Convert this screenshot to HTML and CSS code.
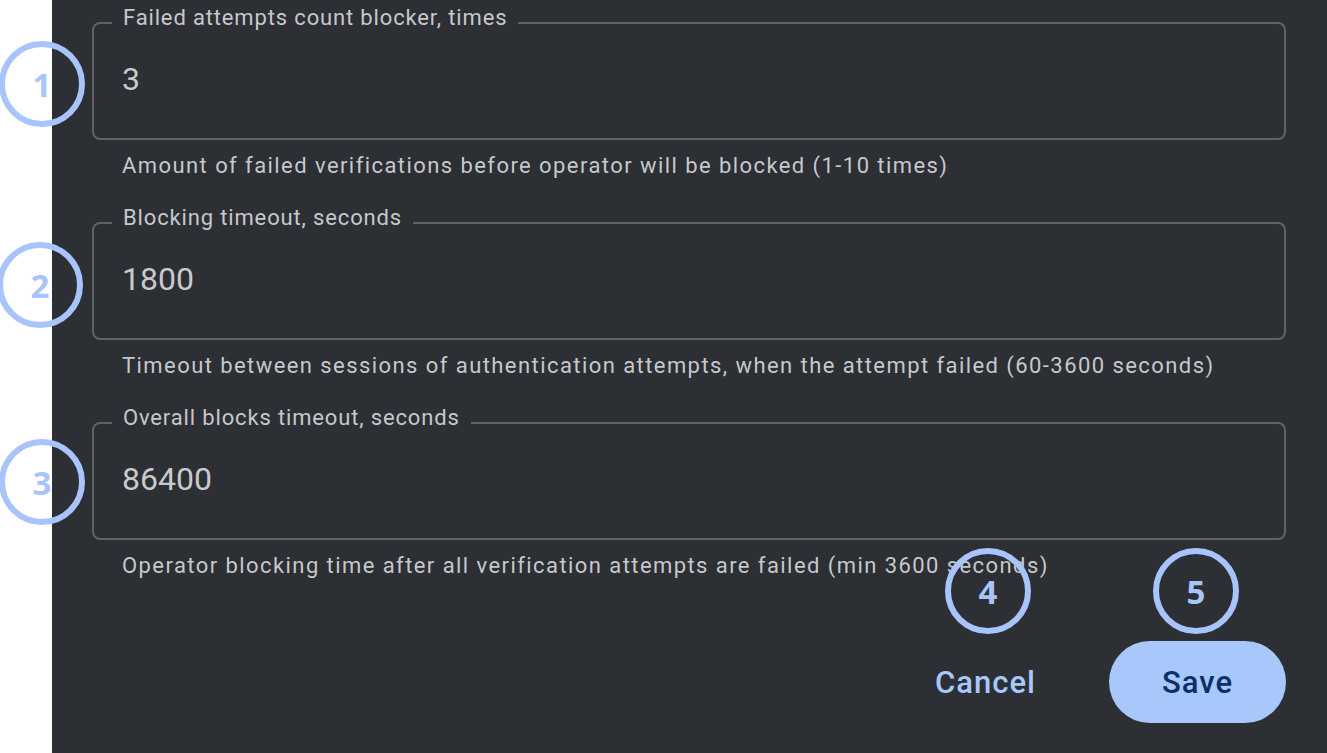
FILE: index.html
```html
<!DOCTYPE html>
<html lang="en">
<head>
<meta charset="utf-8">
<title>Blocking settings</title>
<link rel="stylesheet" href="styles.css">
</head>
<body>
<div class="page">
  <div class="gutter"></div>
  <main class="panel">
    <div class="group">
      <fieldset class="field">
        <legend class="field-label">Failed attempts count blocker, times</legend>
        <div class="field-value">3</div>
      </fieldset>
      <p class="helper">Amount of failed verifications before operator will be blocked (1-10 times)</p>
    </div>
    <div class="group">
      <fieldset class="field">
        <legend class="field-label">Blocking timeout, seconds</legend>
        <div class="field-value">1800</div>
      </fieldset>
      <p class="helper">Timeout between sessions of authentication attempts, when the attempt failed (60-3600 seconds)</p>
    </div>
    <div class="group">
      <fieldset class="field">
        <legend class="field-label">Overall blocks timeout, seconds</legend>
        <div class="field-value">86400</div>
      </fieldset>
      <p class="helper">Operator blocking time after all verification attempts are failed (min 3600 seconds)</p>
    </div>
    <div class="actions">
      <button class="btn btn-text" type="button">Cancel</button>
      <button class="btn btn-filled" type="button">Save</button>
    </div>
  </main>
  <span class="marker m1">1</span>
  <span class="marker m2">2</span>
  <span class="marker m3">3</span>
  <span class="marker m4">4</span>
  <span class="marker m5">5</span>
</div>
</body>
</html>
```
FILE: styles.css
```css
html, body {
  margin: 0;
  padding: 0;
  background: #ffffff;
}
body {
  width: 1327px;
  height: 753px;
  overflow: hidden;
  font-family: Roboto, "Liberation Sans", sans-serif;
}
.page {
  position: relative;
  display: flex;
  height: 753px;
}
.gutter {
  width: 52px;
  flex: none;
  background: #ffffff;
}
.panel {
  flex: 1;
  background: #2c2f33;
  padding: 5px 41px 0 40px;
  display: flex;
  flex-direction: column;
}
.group {
  height: 200px;
  display: flex;
  flex-direction: column;
}
.field {
  margin: 0;
  padding: 0 18px;
  border: 2px solid #5f6367;
  border-radius: 8px;
  min-width: 0;
}
.field-label {
  padding: 0 11px 10px;
  font-size: 22px;
  line-height: 26px;
  color: #c6c8cc;
  letter-spacing: 0.85px;
}
.field-value {
  padding: 18px 10px 39px;
  font-size: 32px;
  line-height: 40px;
  color: #c8cacd;
}
.helper {
  margin: 13px 0 0;
  padding-left: 30px;
  font-size: 22px;
  line-height: 26px;
  color: #c6c8cc;
  letter-spacing: 1.43px;
}
.actions {
  padding-top: 36px;
  display: flex;
  justify-content: flex-end;
  align-items: center;
  gap: 48px;
}
.btn {
  font-family: Roboto, "Liberation Sans", sans-serif;
  font-weight: 500;
  font-size: 31px;
  letter-spacing: 1px;
  border: none;
  height: 82px;
  border-radius: 41px;
  cursor: pointer;
}
.btn-text {
  background: transparent;
  color: #a8c7fa;
  padding: 0 25px;
}
.btn-filled {
  background: #a8c7fa;
  color: #0a3068;
  width: 177px;
  padding: 0;
}
.marker {
  position: absolute;
  width: 74px;
  height: 74px;
  border: 6px solid #a8c4fb;
  border-radius: 50%;
  display: flex;
  align-items: center;
  justify-content: center;
  font-family: "Open Sans", "DejaVu Sans", sans-serif;
  font-weight: 700;
  font-size: 33px;
  color: #a8c4fb;
  line-height: 1;
}
.m1 { left: -1px; top: 41px; }
.m2 { left: -3px; top: 242px; }
.m3 { left: -1px; top: 439px; }
.m4 { left: 945px; top: 548px; }
.m5 { left: 1153px; top: 548px; }
```
